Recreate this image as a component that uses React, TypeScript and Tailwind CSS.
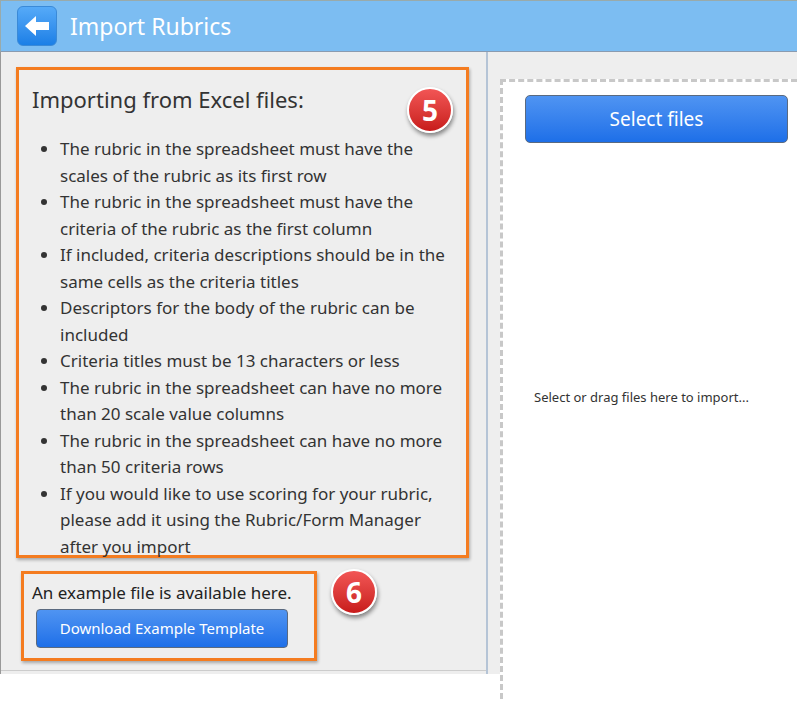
const items = [
  'The rubric in the spreadsheet must have the scales of the rubric as its first row',
  'The rubric in the spreadsheet must have the criteria of the rubric as the first column',
  'If included, criteria descriptions should be in the same cells as the criteria titles',
  'Descriptors for the body of the rubric can be included',
  'Criteria titles must be 13 characters or less',
  'The rubric in the spreadsheet can have no more than 20 scale value columns',
  'The rubric in the spreadsheet can have no more than 50 criteria rows',
  'If you would like to use scoring for your rubric, please add it using the Rubric/Form Manager after you import',
];

const Badge = ({ n }: { n: string }) => (
  <div className="absolute w-[46px] h-[46px] rounded-full bg-gradient-to-b from-[#f25555] to-[#c81a1a] border-2 border-white shadow-[1px_3px_4px_rgba(0,0,0,0.45)] flex items-center justify-center text-white text-[28px] font-bold leading-none">
    {n}
  </div>
);

export default function App() {
  return (
    <div className="w-[797px] h-[701px] bg-white overflow-hidden text-[#333] [font-family:'Liberation_Sans',Arial,sans-serif]">
      <div className="h-[52px] bg-[#7cbdf2] border-t border-l border-[#9aa] flex items-center pl-[16px] gap-[13px] border-b border-b-[#8a9bb0]">
        <div className="w-[40px] h-[40px] rounded-[6px] bg-gradient-to-b from-[#55aaf8] to-[#1a7fe6] border border-[#3a8ad8] flex items-center justify-center">
          <svg width="26" height="22" viewBox="0 0 26 22"><path d="M1 11 L12 1 V7 H25 V15 H12 V21 Z" fill="white" /></svg>
        </div>
        <div className="text-white text-[23px]">Import Rubrics</div>
      </div>
      <div className="flex h-[622px] border-l border-[#999]">
        <div className="w-[487px] bg-[#eeeeee] border-r-2 border-[#b5c4d6] pt-[15px] pl-[15px] relative">
          <div className="w-[453px] h-[491px] border-[3px] border-[#f47c20] shadow-[1px_2px_3px_rgba(0,0,0,0.3)] pt-[13px] pl-[13px] pr-[8px] relative">
            <div className="text-[22px] text-[#333]">Importing from Excel files:</div>
            <div className="absolute left-[388px] top-[17px]"><Badge n="5" /></div>
            <ul className="list-disc pl-[28px] mt-[20px] text-[17px] leading-[26.5px]">
              {items.map((t) => (
                <li key={t}>{t}</li>
              ))}
            </ul>
          </div>
          <div className="mt-[13px] ml-[5px] w-[296px] h-[90px] border-[3px] border-[#f47c20] shadow-[1px_2px_3px_rgba(0,0,0,0.3)] pl-[8px] pt-[6px]">
            <div className="text-[17px] text-[#222]">An example file is available here.</div>
            <div className="mt-[3px] ml-[4px] w-[252px] h-[39px] rounded-[4px] bg-gradient-to-b from-[#4f94f2] to-[#1d6fe8] border border-[#5a6a80] text-white text-[15px] flex items-center justify-center">
              Download Example Template
            </div>
          </div>
          <div className="absolute left-[330px] top-[517px]"><Badge n="6" /></div>
          <div className="absolute left-0 right-0 top-[618px] border-t border-[#ccc]" />
        </div>
        <div className="flex-1 bg-[#eeeeee] pt-[27px] pl-[12px]">
          <div className="h-[620px] bg-white border-t-[3px] border-l-[3px] border-dashed border-[#c8c8c8] pt-[13px] pl-[22px] flex flex-col">
            <div className="w-[263px] h-[48px] rounded-[5px] bg-gradient-to-b from-[#4f94f2] to-[#1d6fe8] border border-[#5a6a80] text-white text-[19px] flex items-center justify-center">
              Select files
            </div>
            <div className="mt-[245px] ml-[9px] text-[13px] text-[#333]">Select or drag files here to import...</div>
          </div>
        </div>
      </div>
    </div>
  );
}
